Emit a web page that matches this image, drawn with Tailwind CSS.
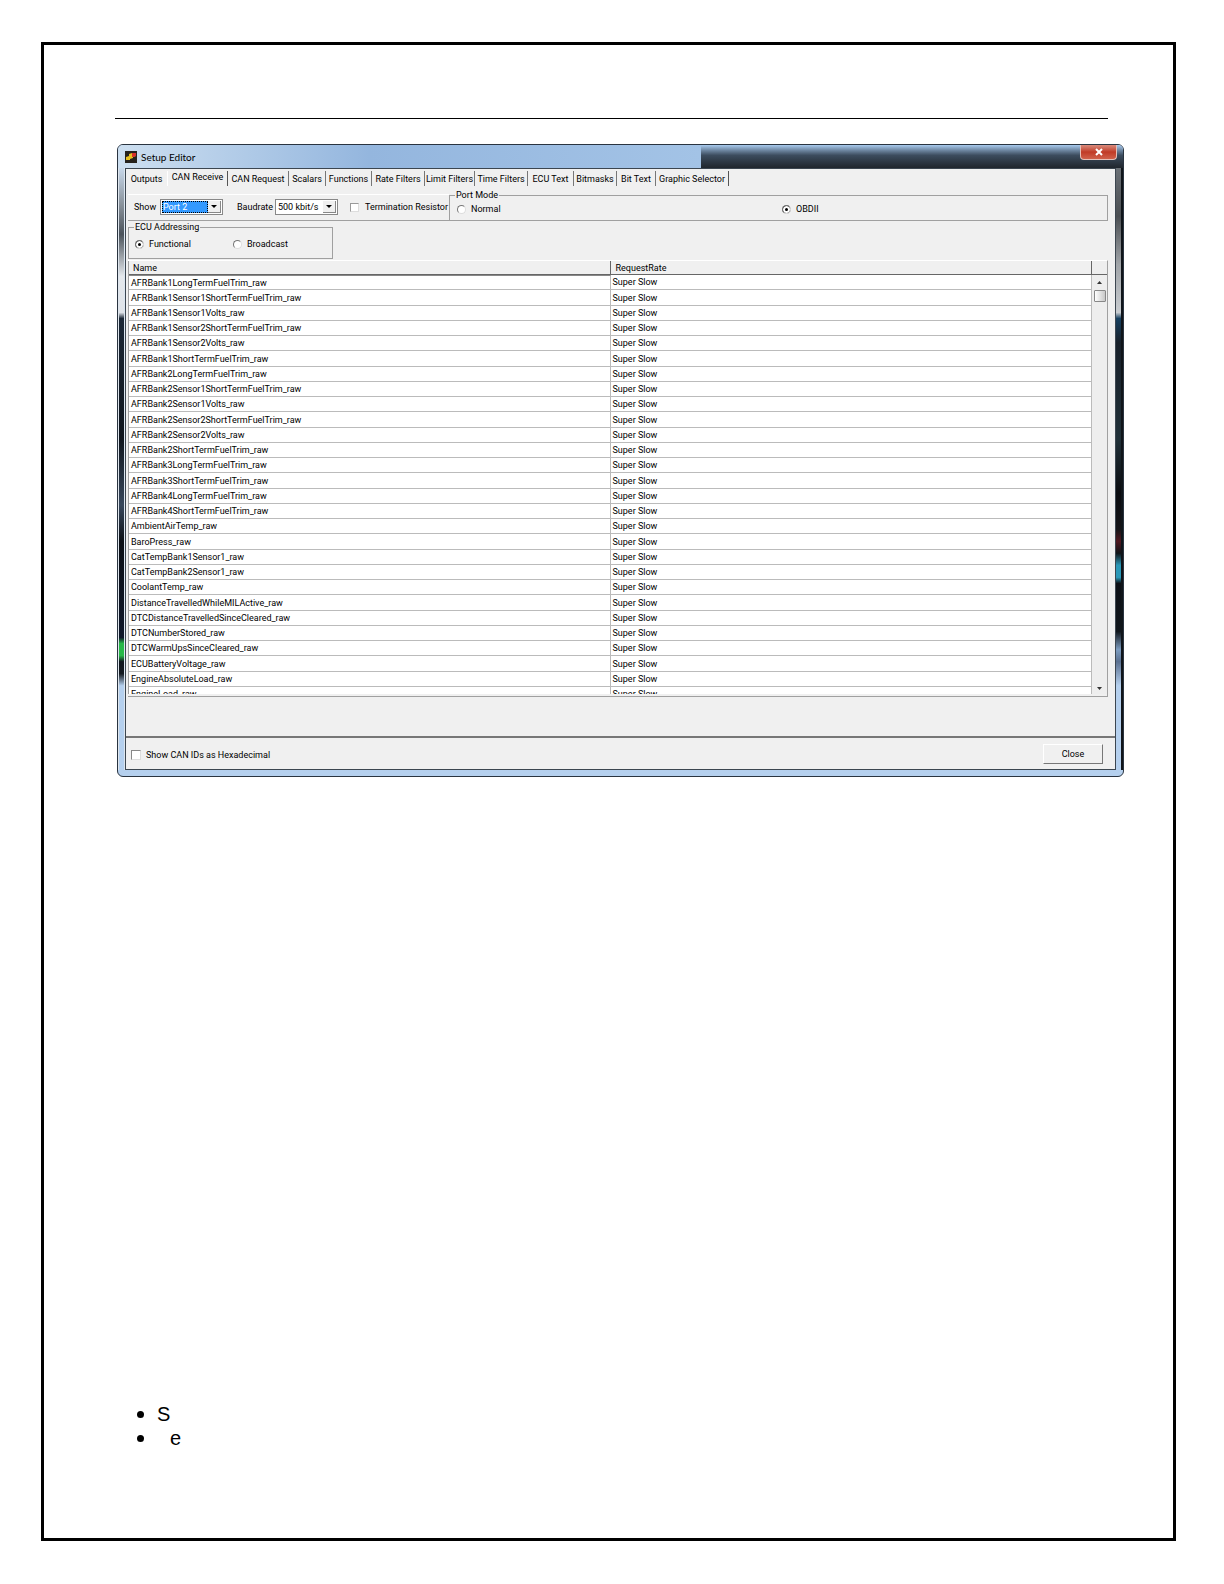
<!DOCTYPE html>
<html lang="en">
<head>
    <meta charset="UTF-8">
    <meta name="viewport" content="width=device-width, initial-scale=1.0">
    <title>Setup Editor</title>
    <script src="https://cdn.jsdelivr.net/npm/@tailwindcss/browser@4"></script>
</head>
<body class="bg-white text-black">
    <div class="min-h-screen flex flex-col pt-[42px] pb-[43px] pl-[41px] pr-[48px]">
        <main class="grow flex flex-col border-[3px] border-black pt-[73px] pl-[71px] pr-[49px] pb-[88px]">
            <hr class="border-t border-black mr-4">

            <!-- Setup Editor window -->
            <section class="mt-[25px] ml-[2px] rounded-md border border-[#2a3440] bg-[#b5d0ee] text-[9px] leading-[12px] font-[Roboto,sans-serif] overflow-hidden">
                <!-- Title bar -->
                <header class="h-[23px] flex items-center bg-linear-to-r from-[#cddff0] via-[#94b6de] via-25% to-[#a3c3e6] to-58%">
                    <svg class="ml-[7px] shrink-0" width="12" height="12" viewBox="0 0 12 12">
                        <rect width="12" height="12" fill="#26221c"/>
                        <path d="M1 9V6l3-1V3l3-1h4v3L8 6v1L5 8v1z" fill="#e8c020"/>
                        <path d="M7 2h4v3L8 6H7z" fill="#d8302a"/>
                    </svg>
                    <h1 class="ml-1 text-[10px] leading-[12px] font-[Lato,sans-serif]">Setup Editor</h1>
                    <div class="ml-auto self-stretch w-[42%] flex justify-end items-start pr-[6px] bg-linear-to-b from-[#a9cbef] via-[#3c4c5e] via-45% to-[#20262d]">
                        <button aria-label="Close window" class="w-[37px] h-[15px] flex items-center justify-center rounded-b border border-t-0 border-[#e6c0b8] bg-linear-to-b from-[#d98a7c] via-[#c03a26] via-50% to-[#d0604a]">
                            <svg width="8" height="8" viewBox="0 0 8 8"><path d="M1 1l6 6M7 1L1 7" stroke="#fff" stroke-width="2"/></svg>
                        </button>
                    </div>
                </header>

                <div class="flex pb-[6px]">
                    <!-- Glass frame, left -->
                    <div class="w-[7px] shrink-0 border-l border-r border-l-[#dfe6ee] border-r-[#dce6f0] bg-[linear-gradient(#c8d8ea_0%,#8a939c_6%,#4a525a_11%,#e4e8ec_18%,#dfe3e8_24%,#1c2836_25%,#10161e_45%,#38485c_56%,#0c1016_62%,#10182a_78%,#28b848_79%,#28b848_81%,#10161e_82%,#141a20_84%,#b5d0ee_86%)]"></div>

                    <div class="grow min-w-0 border border-[#3c4650] bg-[#f0f0f0]">
                        <!-- Tabs -->
                        <nav class="flex h-[18px] items-start pt-[2px] whitespace-nowrap">
                            <button class="h-[15px] w-[41px] shrink-0">Outputs</button>
                            <button class="h-[15px] w-[61px] pb-[3px] shrink-0 border-r border-[#555] border-l border-l-white">CAN Receive</button>
                            <button class="h-[15px] w-[61px] shrink-0 border-r border-[#777]">CAN Request</button>
                            <button class="h-[15px] w-[37px] shrink-0 border-r border-[#777]">Scalars</button>
                            <button class="h-[15px] w-[46px] shrink-0 border-r border-[#777]">Functions</button>
                            <button class="h-[15px] w-[53px] shrink-0 border-r border-[#777]">Rate Filters</button>
                            <button class="h-[15px] w-[50px] shrink-0 border-r border-[#777]">Limit Filters</button>
                            <button class="h-[15px] w-[53px] shrink-0 border-r border-[#777]">Time Filters</button>
                            <button class="h-[15px] w-[46px] shrink-0 border-r border-[#777]">ECU Text</button>
                            <button class="h-[15px] w-[43px] shrink-0 border-r border-[#777]">Bitmasks</button>
                            <button class="h-[15px] w-[39px] shrink-0 border-r border-[#777]">Bit Text</button>
                            <button class="h-[15px] w-[73px] shrink-0 border-r border-[#555]">Graphic Selector</button>
                        </nav>

                        <div class="pl-[2px] pr-[7px] pt-[2px]">
                            <!-- Port settings -->
                            <div class="flex items-end h-8">
                                <div class="w-[321px] shrink-0 h-[27px] flex items-center pl-[6px] pb-px border-t border-b border-t-white border-b-[#a0a0a0] whitespace-nowrap">
                                    <label for="port" class="w-[26px] shrink-0">Show</label>
                                    <div class="w-[63px] shrink-0 h-4 flex border border-[#888] bg-white p-px">
                                        <select id="port" class="appearance-none grow min-w-0 bg-[#3399ff] text-white leading-[10px] border border-dotted border-black">
                                            <option>Port 2</option>
                                        </select>
                                        <span class="w-[13px] flex items-center justify-center bg-[#f0f0f0] border-r border-b border-[#888]">
                                            <svg width="6" height="3" viewBox="0 0 6 3"><path d="M0 0h6L3 3z"/></svg>
                                        </span>
                                    </div>
                                    <label for="baud" class="ml-[14px] w-[38px] shrink-0">Baudrate</label>
                                    <div class="w-[63px] shrink-0 h-4 flex border border-[#888] bg-white p-px">
                                        <select id="baud" class="appearance-none grow min-w-0 pl-px">
                                            <option>500 kbit/s</option>
                                        </select>
                                        <span class="w-[13px] flex items-center justify-center bg-[#f0f0f0] border-r border-b border-[#888]">
                                            <svg width="6" height="3" viewBox="0 0 6 3"><path d="M0 0h6L3 3z"/></svg>
                                        </span>
                                    </div>
                                    <label class="ml-3 flex items-center gap-[6px]">
                                        <input type="checkbox" class="appearance-none size-[9px] bg-white border border-[#999] border-r-[#ddd] border-b-[#ddd]">
                                        Termination Resistor
                                    </label>
                                </div>
                                <fieldset class="grow h-8 border border-[#a0a0a0]">
                                    <legend class="ml-[5px] px-px">Port Mode</legend>
                                    <div class="grid grid-cols-2 h-4 items-center pl-[7px]">
                                        <label class="flex items-center gap-[5px]">
                                            <input type="radio" name="mode" class="appearance-none size-[9px] rounded-full bg-white border border-[#777] border-r-[#ddd] border-b-[#ddd]">
                                            Normal
                                        </label>
                                        <label class="flex items-center gap-[5px]">
                                            <input type="radio" name="mode" checked class="appearance-none size-[9px] rounded-full bg-black border border-[#777] border-r-[#ddd] border-b-[#ddd] shadow-[inset_0_0_0_2px_#fff]">
                                            OBDII
                                        </label>
                                    </div>
                                </fieldset>
                            </div>

                            <fieldset class="w-[205px] h-[38px] border border-[#a0a0a0]">
                                <legend class="ml-[5px] px-px">ECU Addressing</legend>
                                <div class="flex h-[22px] items-center pl-[6px]">
                                    <label class="flex items-center gap-[5px] w-[98px]">
                                        <input type="radio" name="addressing" checked class="appearance-none size-[9px] rounded-full bg-black border border-[#777] border-r-[#ddd] border-b-[#ddd] shadow-[inset_0_0_0_2px_#fff]">
                                        Functional
                                    </label>
                                    <label class="flex items-center gap-[5px]">
                                        <input type="radio" name="addressing" class="appearance-none size-[9px] rounded-full bg-white border border-[#777] border-r-[#ddd] border-b-[#ddd]">
                                        Broadcast
                                    </label>
                                </div>
                            </fieldset>

                            <!-- Channel list -->
                            <div class="mt-px h-[437px] flex pb-[2px] border-t border-t-white border-r border-b border-r-[#a0a0a0] border-b-[#a0a0a0]">
                                <div class="grow overflow-hidden border-l border-[#a0a0a0]">
                                    <table class="w-full table-fixed border-separate border-spacing-0">
                                        <thead>
                                            <tr class="text-left">
                                                <th class="h-[14px] w-[50%] p-0 pl-1 font-normal bg-[#f0f0f0] border-r border-b border-[#666]">Name</th>
                                                <th class="h-[14px] p-0 pl-[5px] font-normal bg-[#f0f0f0] border-r border-b border-[#666]">RequestRate</th>
                                            </tr>
                                        </thead>
                                        <tbody id="channels" class="bg-white [&>tr]:h-[15px] [&>tr:nth-child(4n+2)]:h-[16px] [&>tr:first-child>td:first-child]:border-t [&>tr:first-child>td:first-child]:border-t-[#888]"></tbody>
                                    </table>
                                </div>
                                <!-- Scroll bar -->
                                <div class="w-[15px] shrink-0 flex flex-col items-center bg-[#eee]">
                                    <div class="w-full h-[14px] border-b border-[#666]"></div>
                                    <svg class="mt-[6px] shrink-0" width="5" height="3" viewBox="0 0 5 3"><path d="M0 3h5L2.500 0z" fill="#333"/></svg>
                                    <div class="mt-[6px] w-3 h-3 border border-[#888] rounded-[1px] bg-linear-to-r from-white to-[#c8c8c8]"></div>
                                    <svg class="mt-auto mb-[4px] shrink-0" width="5" height="3" viewBox="0 0 5 3"><path d="M0 0h5L2.500 3z" fill="#333"/></svg>
                                </div>
                            </div>
                        </div>

                        <!-- Footer -->
                        <footer class="mt-[39px] h-[33px] flex items-center justify-between pl-[5px] pr-[12px] border-t-2 border-[#777]">
                            <label class="flex items-center gap-[5px] pt-[3px]">
                                <input type="checkbox" class="appearance-none size-[10px] bg-white border border-[#888] border-r-[#ddd] border-b-[#ddd]">
                                Show CAN IDs as Hexadecimal
                            </label>
                            <button class="w-[60px] h-5 border border-white border-r-[#777] border-b-[#777]">Close</button>
                        </footer>
                    </div>

                    <!-- Glass frame, right -->
                    <div class="w-[7px] shrink-0 border-r-2 border-[#10151a] bg-[linear-gradient(#6a7076_0%,#4a4e52_8%,#a0a4a8_16%,#c8ccd0_24%,#164060_25%,#18202a_29%,#203038_45%,#0a0c10_54%,#141418_60%,#501820_62%,#101418_64%,#2a98b8_66%,#2a98b8_68%,#0c1016_69%,#10161c_77%,#7c9cc0_80%,#5a7090_82%,#b5d0ee_86%)]"></div>
                </div>
            </section>

            <ul class="mt-auto ml-[22px] text-[20px] leading-[24px] font-['Liberation_Sans',sans-serif]">
                <li class="flex items-center"><span class="size-[7px] rounded-full bg-black mr-[13px]"></span>S</li>
                <li class="flex items-center"><span class="size-[7px] rounded-full bg-black mr-[26px]"></span>e</li>
            </ul>
        </main>
    </div>

    <script>
        const channels = [
            'AFRBank1LongTermFuelTrim_raw',
            'AFRBank1Sensor1ShortTermFuelTrim_raw',
            'AFRBank1Sensor1Volts_raw',
            'AFRBank1Sensor2ShortTermFuelTrim_raw',
            'AFRBank1Sensor2Volts_raw',
            'AFRBank1ShortTermFuelTrim_raw',
            'AFRBank2LongTermFuelTrim_raw',
            'AFRBank2Sensor1ShortTermFuelTrim_raw',
            'AFRBank2Sensor1Volts_raw',
            'AFRBank2Sensor2ShortTermFuelTrim_raw',
            'AFRBank2Sensor2Volts_raw',
            'AFRBank2ShortTermFuelTrim_raw',
            'AFRBank3LongTermFuelTrim_raw',
            'AFRBank3ShortTermFuelTrim_raw',
            'AFRBank4LongTermFuelTrim_raw',
            'AFRBank4ShortTermFuelTrim_raw',
            'AmbientAirTemp_raw',
            'BaroPress_raw',
            'CatTempBank1Sensor1_raw',
            'CatTempBank2Sensor1_raw',
            'CoolantTemp_raw',
            'DistanceTravelledWhileMILActive_raw',
            'DTCDistanceTravelledSinceCleared_raw',
            'DTCNumberStored_raw',
            'DTCWarmUpsSinceCleared_raw',
            'ECUBatteryVoltage_raw',
            'EngineAbsoluteLoad_raw',
            'EngineLoad_raw'
        ];

        document.getElementById('channels').innerHTML = channels.map(name => `
            <tr>
                <td class="p-0 pl-[2px] border-r border-b border-[#bbb]">${name}</td>
                <td class="p-0 pl-[2px] border-r border-b border-[#bbb]">Super Slow</td>
            </tr>`).join('');
    </script>
</body>
</html>
